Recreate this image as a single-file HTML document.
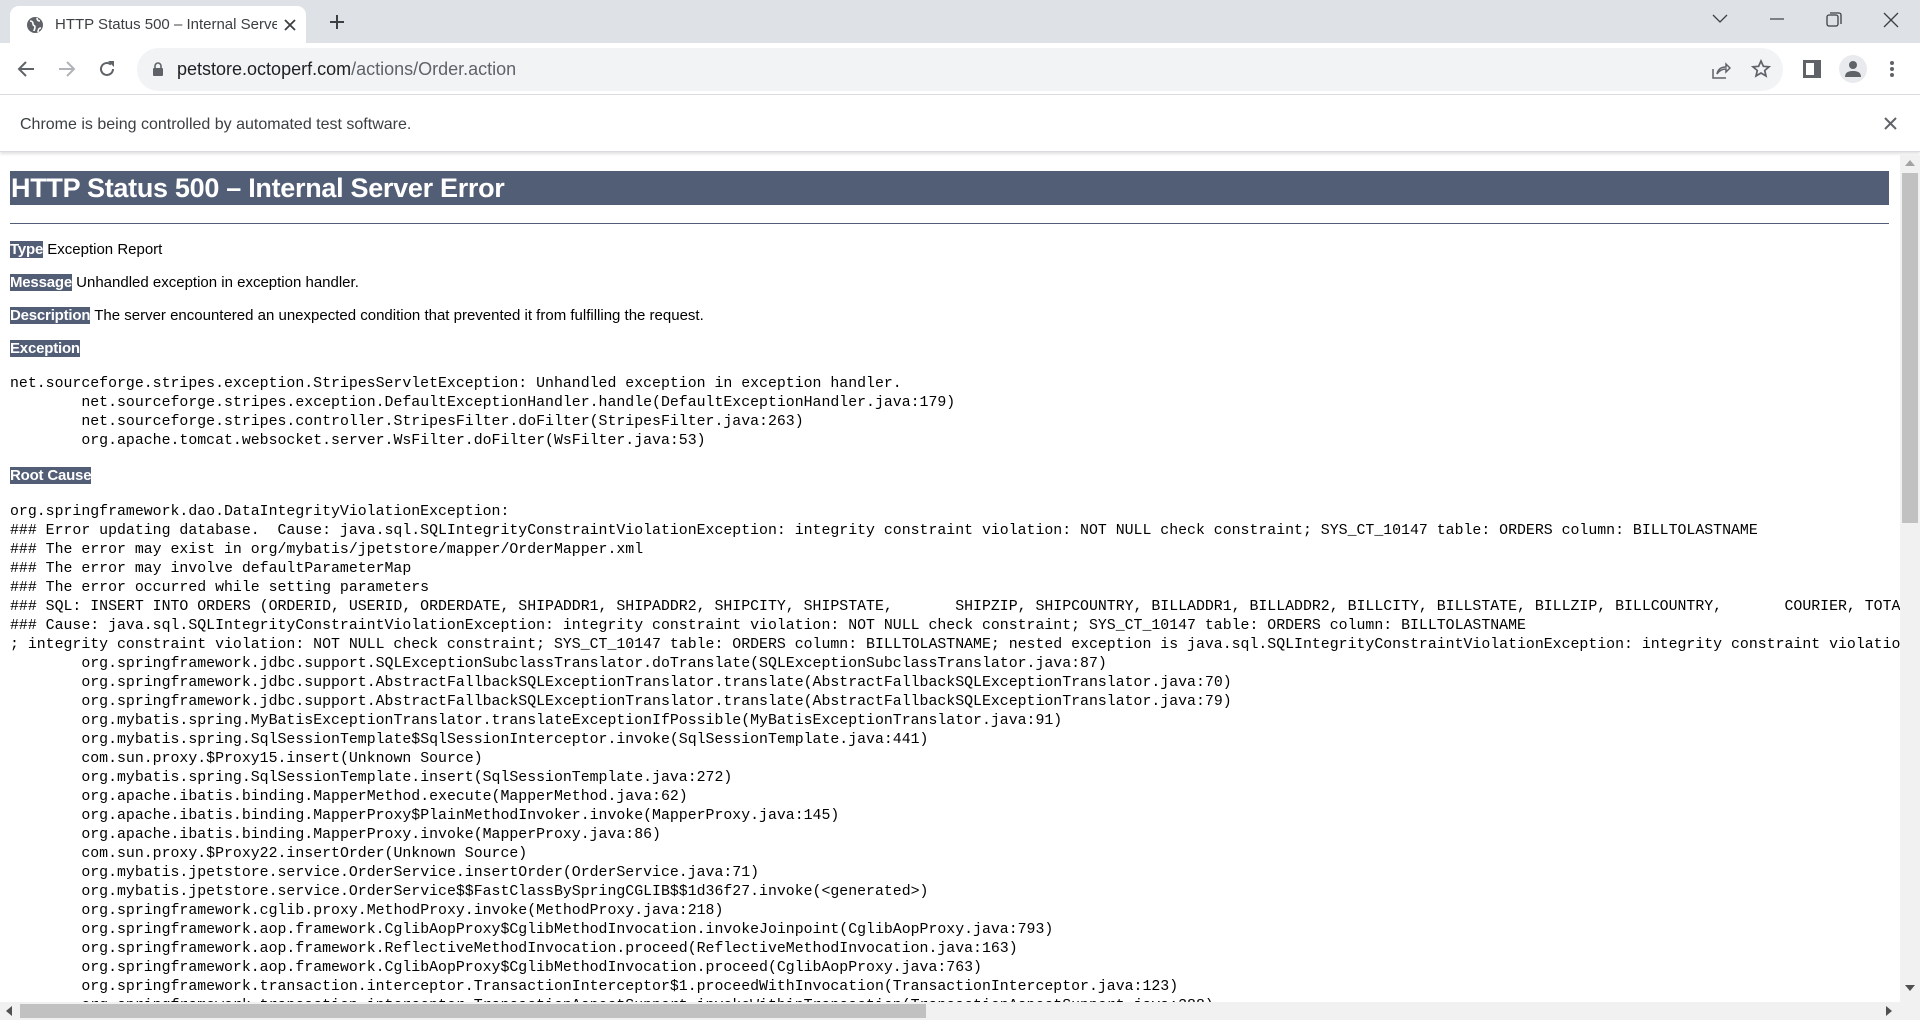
<!DOCTYPE html>
<html><head><meta charset="utf-8"><style>
*{margin:0;padding:0;box-sizing:border-box}
body{width:1920px;height:1020px;overflow:hidden;background:#fff;font-family:"Liberation Sans",sans-serif;position:relative}
.tabs{position:absolute;top:0;left:0;width:1920px;height:43px;background:#dee1e6}
.tab{position:absolute;left:10px;top:6px;width:296px;height:37px;background:#fff;border-radius:9px 9px 0 0}
.tab .t{position:absolute;left:45px;top:10px;font-size:15px;color:#3c4043;white-space:nowrap;width:222px;overflow:hidden}
.toolbar{position:absolute;top:43px;left:0;width:1920px;height:52px;background:#fff;border-bottom:1px solid #dadce0}
.omni{position:absolute;left:137px;top:5px;width:1646px;height:43px;background:#f1f3f4;border-radius:22px}
.omni .u{position:absolute;left:40px;top:11px;font-size:18px;color:#202124}
.omni .u span{color:#5f6368}
.info{position:absolute;top:96px;left:0;width:1920px;height:56px;background:#fff;border-bottom:1px solid #dadce0;box-shadow:0 2px 3px rgba(0,0,0,.12)}
.info .t{position:absolute;left:20px;top:20px;font-size:16px;color:#3c4043}
.content{position:absolute;top:155px;left:0;width:1900px;height:847px;overflow:hidden}
h1{position:absolute;left:10px;top:16px;width:1879px;height:34px;background:#525d76;color:#fff;font-size:27px;font-weight:bold;line-height:34px;padding-left:1px;letter-spacing:-0.3px}
.hr{position:absolute;left:10px;top:68px;width:1879px;height:1px;background:#525d76}
.p{position:absolute;left:10px;font-size:15px;color:#000;white-space:nowrap}
.p b{background:#525d76;color:#fff;font-weight:bold;letter-spacing:-0.2px}
pre{position:absolute;left:10px;font-family:"Liberation Mono",monospace;font-size:14.87px;line-height:19px;color:#000;white-space:pre;tab-size:8}
.vs{position:absolute;left:1900px;top:155px;width:20px;height:847px;background:#f1f1f1}
.hs{position:absolute;left:0;top:1002px;width:1920px;height:18px;background:#f1f1f1}
</style></head><body>
<div class="tabs">
 <div class="tab">
  <svg style="position:absolute;left:16px;top:10px" width="18" height="18" viewBox="0 0 18 18"><circle cx="9" cy="9" r="8" fill="#5f6368"/><path d="M4 5c2 0 3 1 3 3s2 1 2 3-1 3-1 4M11 2c0 2 1 3 3 3M12 16c0-2 1-4 3-4" stroke="#fff" stroke-width="1.6" fill="none"/></svg>
  <div class="t">HTTP Status 500 – Internal Serve</div>
  <svg style="position:absolute;left:274px;top:13px" width="12" height="12"><path d="M1 1L11 11M11 1L1 11" stroke="#3c4043" stroke-width="1.8"/></svg>
 </div>
 <svg style="position:absolute;left:328px;top:13px" width="18" height="18"><path d="M9 2V16M2 9H16" stroke="#3c4043" stroke-width="2"/></svg>
 <svg style="position:absolute;left:1712px;top:14px" width="16" height="10"><path d="M1 1L8 8L15 1" stroke="#3c4043" stroke-width="1.3" fill="none"/></svg>
 <svg style="position:absolute;left:1770px;top:18px" width="14" height="2"><path d="M0 1H14" stroke="#3c4043" stroke-width="1.2"/></svg>
 <svg style="position:absolute;left:1826px;top:12px" width="16" height="16"><rect x="1" y="3" width="11" height="11" rx="2" stroke="#3c4043" stroke-width="1.3" fill="none"/><path d="M4 1H13a2 2 0 0 1 2 2V12" stroke="#3c4043" stroke-width="1.3" fill="none"/></svg>
 <svg style="position:absolute;left:1883px;top:12px" width="16" height="16"><path d="M1 1L15 15M15 1L1 15" stroke="#3c4043" stroke-width="1.3"/></svg>
</div>
<div class="toolbar">
 <svg style="position:absolute;left:17px;top:17px" width="18" height="18"><path d="M17 9H2M9 2L2 9L9 16" stroke="#5f6368" stroke-width="2" fill="none"/></svg>
 <svg style="position:absolute;left:58px;top:17px" width="18" height="18"><path d="M1 9H16M9 2L16 9L9 16" stroke="#b0b3b7" stroke-width="2" fill="none"/></svg>
 <svg style="position:absolute;left:98px;top:17px" width="18" height="18"><path d="M15 9A6 6 0 1 1 13 4.5" stroke="#5f6368" stroke-width="2" fill="none"/><path d="M10 1H16V7Z" fill="#5f6368"/></svg>
 <div class="omni">
  <svg style="position:absolute;left:15px;top:14px" width="12" height="15"><rect x="1" y="6" width="10" height="8" rx="1" fill="#5f6368"/><path d="M3 6V4a3 3 0 0 1 6 0V6" stroke="#5f6368" stroke-width="1.6" fill="none"/></svg>
  <div class="u">petstore.octoperf.com<span>/actions/Order.action</span></div>
  <svg style="position:absolute;left:1574px;top:12px" width="20" height="20"><path d="M2 9V18H15M6 14C7 9 10 7 15 7V4L19 8L15 12V9C11 9 8 11 6 14Z" stroke="#5f6368" stroke-width="1.5" fill="none"/></svg>
  <svg style="position:absolute;left:1614px;top:11px" width="20" height="20"><path d="M10 2L12.4 7.3L18 7.8L13.7 11.5L15 17L10 14L5 17L6.3 11.5L2 7.8L7.6 7.3Z" stroke="#5f6368" stroke-width="1.7" fill="none"/></svg>
 </div>
 <svg style="position:absolute;left:1803px;top:17px" width="18" height="18"><rect x="0" y="0" width="18" height="18" fill="#5f6368"/><rect x="3" y="3" width="8" height="12" fill="#fff"/></svg>
 <div style="position:absolute;left:1839px;top:12px;width:28px;height:28px;border-radius:50%;background:#e8eaed"></div>
 <svg style="position:absolute;left:1843px;top:16px" width="20" height="20"><circle cx="10" cy="6" r="4" fill="#5f6368"/><path d="M2 18C2 13 6 12 10 12S18 13 18 18Z" fill="#5f6368"/></svg>
 <svg style="position:absolute;left:1889px;top:17px" width="6" height="20"><circle cx="3" cy="3" r="2" fill="#5f6368"/><circle cx="3" cy="9" r="2" fill="#5f6368"/><circle cx="3" cy="15" r="2" fill="#5f6368"/></svg>
</div>
<div class="info">
 <div class="t">Chrome is being controlled by automated test software.</div>
 <svg style="position:absolute;left:1884px;top:21px" width="13" height="13"><path d="M1 1L12 12M12 1L1 12" stroke="#5f6368" stroke-width="2"/></svg>
</div>
<div class="content">
<h1>HTTP Status 500 – Internal Server Error</h1>
<div class="hr"></div>
<div class="p" style="top:86px"><b>Type</b> Exception Report</div>
<div class="p" style="top:119px"><b>Message</b> Unhandled exception in exception handler.</div>
<div class="p" style="top:152px"><b>Description</b> The server encountered an unexpected condition that prevented it from fulfilling the request.</div>
<div class="p" style="top:185px"><b>Exception</b></div>
<pre style="top:220px">net.sourceforge.stripes.exception.StripesServletException: Unhandled exception in exception handler.
	net.sourceforge.stripes.exception.DefaultExceptionHandler.handle(DefaultExceptionHandler.java:179)
	net.sourceforge.stripes.controller.StripesFilter.doFilter(StripesFilter.java:263)
	org.apache.tomcat.websocket.server.WsFilter.doFilter(WsFilter.java:53)</pre>
<div class="p" style="top:312px"><b>Root Cause</b></div>
<pre style="top:348px">org.springframework.dao.DataIntegrityViolationException: 
### Error updating database.  Cause: java.sql.SQLIntegrityConstraintViolationException: integrity constraint violation: NOT NULL check constraint; SYS_CT_10147 table: ORDERS column: BILLTOLASTNAME
### The error may exist in org/mybatis/jpetstore/mapper/OrderMapper.xml
### The error may involve defaultParameterMap
### The error occurred while setting parameters
### SQL: INSERT INTO ORDERS (ORDERID, USERID, ORDERDATE, SHIPADDR1, SHIPADDR2, SHIPCITY, SHIPSTATE,       SHIPZIP, SHIPCOUNTRY, BILLADDR1, BILLADDR2, BILLCITY, BILLSTATE, BILLZIP, BILLCOUNTRY,       COURIER, TOTALPRICE
### Cause: java.sql.SQLIntegrityConstraintViolationException: integrity constraint violation: NOT NULL check constraint; SYS_CT_10147 table: ORDERS column: BILLTOLASTNAME
; integrity constraint violation: NOT NULL check constraint; SYS_CT_10147 table: ORDERS column: BILLTOLASTNAME; nested exception is java.sql.SQLIntegrityConstraintViolationException: integrity constraint violation
	org.springframework.jdbc.support.SQLExceptionSubclassTranslator.doTranslate(SQLExceptionSubclassTranslator.java:87)
	org.springframework.jdbc.support.AbstractFallbackSQLExceptionTranslator.translate(AbstractFallbackSQLExceptionTranslator.java:70)
	org.springframework.jdbc.support.AbstractFallbackSQLExceptionTranslator.translate(AbstractFallbackSQLExceptionTranslator.java:79)
	org.mybatis.spring.MyBatisExceptionTranslator.translateExceptionIfPossible(MyBatisExceptionTranslator.java:91)
	org.mybatis.spring.SqlSessionTemplate$SqlSessionInterceptor.invoke(SqlSessionTemplate.java:441)
	com.sun.proxy.$Proxy15.insert(Unknown Source)
	org.mybatis.spring.SqlSessionTemplate.insert(SqlSessionTemplate.java:272)
	org.apache.ibatis.binding.MapperMethod.execute(MapperMethod.java:62)
	org.apache.ibatis.binding.MapperProxy$PlainMethodInvoker.invoke(MapperProxy.java:145)
	org.apache.ibatis.binding.MapperProxy.invoke(MapperProxy.java:86)
	com.sun.proxy.$Proxy22.insertOrder(Unknown Source)
	org.mybatis.jpetstore.service.OrderService.insertOrder(OrderService.java:71)
	org.mybatis.jpetstore.service.OrderService$$FastClassBySpringCGLIB$$1d36f27.invoke(&lt;generated&gt;)
	org.springframework.cglib.proxy.MethodProxy.invoke(MethodProxy.java:218)
	org.springframework.aop.framework.CglibAopProxy$CglibMethodInvocation.invokeJoinpoint(CglibAopProxy.java:793)
	org.springframework.aop.framework.ReflectiveMethodInvocation.proceed(ReflectiveMethodInvocation.java:163)
	org.springframework.aop.framework.CglibAopProxy$CglibMethodInvocation.proceed(CglibAopProxy.java:763)
	org.springframework.transaction.interceptor.TransactionInterceptor$1.proceedWithInvocation(TransactionInterceptor.java:123)
	org.springframework.transaction.interceptor.TransactionAspectSupport.invokeWithinTransaction(TransactionAspectSupport.java:388)</pre>
</div>
<div class="vs">
 <svg style="position:absolute;left:5px;top:5px" width="10" height="6"><path d="M0 6L5 0L10 6Z" fill="#a3a3a3"/></svg>
 <div style="position:absolute;left:2px;top:18px;width:16px;height:350px;background:#c1c1c1"></div>
 <svg style="position:absolute;left:5px;top:830px" width="10" height="6"><path d="M0 0L5 6L10 0Z" fill="#505050"/></svg>
</div>
<div class="hs">
 <svg style="position:absolute;left:6px;top:4px" width="6" height="10"><path d="M6 0L0 5L6 10Z" fill="#505050"/></svg>
 <div style="position:absolute;left:20px;top:2px;width:906px;height:14px;background:#c1c1c1"></div>
 <svg style="position:absolute;left:1886px;top:4px" width="6" height="10"><path d="M0 0L6 5L0 10Z" fill="#505050"/></svg>
</div>
</body></html>
